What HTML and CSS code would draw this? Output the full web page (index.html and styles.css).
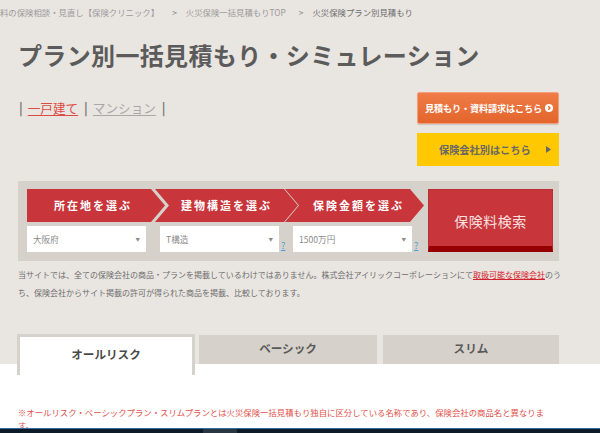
FILE: index.html
```html
<!DOCTYPE html>
<html lang="ja">
<head>
<meta charset="utf-8">
<title>火災保険プラン別見積もり</title>
<link rel="stylesheet" href="styles.css">
</head>
<body>
<div class="breadcrumb">
  <a class="bc-link" href="#">料の保険相談・見直し【保険クリニック】</a>
  <span class="bc-sep">&gt;</span>
  <a class="bc-link" href="#">火災保険一括見積もりTOP</a>
  <span class="bc-sep">&gt;</span>
  <span class="bc-current">火災保険プラン別見積もり</span>
</div>

<div class="wrap">
  <h1 class="title">プラン別一括見積もり・シミュレーション</h1>

  <div class="head-row">
    <div class="types">
      <span class="pipe">|</span>
      <a class="type type-active" href="#">一戸建て</a>
      <span class="pipe">|</span>
      <a class="type" href="#">マンション</a>
      <span class="pipe">|</span>
    </div>
    <div class="actions">
      <a class="btn-orange" href="#">見積もり・資料請求はこちら<svg class="circle-arrow" width="8" height="8" viewBox="0 0 8 8"><circle cx="4" cy="4" r="4" fill="#fff"/><path d="M3.2 2.2 L5 4 L3.2 5.8" fill="none" stroke="#e4672f" stroke-width="1.4"/></svg></a>
      <a class="btn-yellow" href="#"><span>保険会社別はこちら</span><svg class="tri" width="5" height="7" viewBox="0 0 5 7"><path d="M0 0 L5 3.5 L0 7 Z" fill="#666"/></svg></a>
    </div>
  </div>

  <div class="panel">
    <div class="cols">
      <div class="col">
        <div class="step step1">所在地を選ぶ</div>
        <div class="sel-row">
          <div class="select"><span>大阪府</span><span class="arrow">▼</span></div>
        </div>
      </div>
      <div class="col">
        <div class="step step2">建物構造を選ぶ</div>
        <div class="sel-row">
          <div class="select"><span>T構造</span><span class="arrow">▼</span></div>
          <a class="help" href="#">?</a>
        </div>
      </div>
      <div class="col col3">
        <div class="step step3">保険金額を選ぶ</div>
        <div class="sel-row">
          <div class="select"><span>1500万円</span><span class="arrow">▼</span></div>
          <a class="help" href="#">?</a>
        </div>
      </div>
    </div>
    <a class="search" href="#">保険料検索</a>
  </div>

  <p class="note">当サイトでは、全ての保険会社の商品・プランを掲載しているわけではありません。株式会社アイリックコーポレーションにて<a class="note-link" href="#">取扱可能な保険会社</a>のうち、保険会社からサイト掲載の許可が得られた商品を掲載、比較しております。</p>
</div>

<div class="tabbar">
  <div class="tab tab-active">オールリスク</div>
  <div class="tab">ベーシック</div>
  <div class="tab">スリム</div>
</div>
<div class="tabbody">
  <p class="red-note">※オールリスク・ベーシックプラン・スリムプランとは火災保険一括見積もり独自に区分している名称であり、保険会社の商品名と異なります。</p>
</div>

<div class="taskbar"><span class="task-item"></span></div>
</body>
</html>
```

FILE: styles.css
```css
* { box-sizing: border-box; }
html, body { margin: 0; padding: 0; }
body {
  width: 600px;
  height: 433px;
  overflow: hidden;
  background: #e9e5e1;
  font-family: "Noto Sans CJK JP", "Noto Sans", sans-serif;
  color: #666;
}
a { text-decoration: none; }

.breadcrumb {
  height: 25px;
  display: flex;
  align-items: center;
  font-size: 8.4px;
  white-space: nowrap;
  padding-bottom: 1px;
}
.bc-link { color: #9a9a9a; }
.bc-sep { color: #888; margin: 0 9px 0 13px; }
.bc-current { color: #6a6a6a; }

.wrap { padding-left: 18px; width: 560px; }

.title {
  margin: 15px 0 0 0;
  font-size: 24px;
  line-height: 30px;
  font-weight: 700;
  color: #5b5b5b;
  letter-spacing: 0.35px;
}

.head-row {
  margin-top: 22px;
  display: flex;
  justify-content: space-between;
  align-items: flex-start;
}
.types {
  display: flex;
  align-items: center;
  gap: 5px;
  margin-top: 7px;
  font-size: 12.6px;
  line-height: 18px;
}
.pipe { color: #7a7a7a; font-weight: 700; margin-left: 1px; }
.type { color: #a8a8a8; text-decoration: underline; text-underline-offset: 2px; }
.type-active { color: #de4b44; }

.actions {
  display: flex;
  flex-direction: column;
  gap: 9px;
  width: 142px;
  margin-right: 1px;
}
.btn-orange {
  height: 32px;
  display: flex;
  align-items: center;
  justify-content: center;
  gap: 2px;
  background: linear-gradient(#f07c47, #e2652c);
  border: 1px solid #f3a07d;
  border-radius: 2px;
  box-shadow: 0 1px 1px rgba(0,0,0,0.15);
  color: #fff;
  font-weight: 700;
  font-size: 9.2px;
  letter-spacing: -0.2px;
  padding-left: 2px;
}
.circle-arrow { flex: none; margin-left: 1px; }
.btn-yellow {
  height: 33px;
  display: flex;
  align-items: center;
  background: #ffc800;
  color: #676767;
  font-weight: 700;
  font-size: 10.2px;
  padding-left: 22px;
  padding-right: 8px;
}
.btn-yellow span { flex: 1; }

.panel {
  margin-top: 15px;
  width: 541px;
  background: #d6d2cb;
  padding: 8px 6px 9px 9px;
  display: flex;
  align-items: flex-start;
}
.cols {
  display: grid;
  grid-template-columns: 133px 133px 134px;
}
.col { display: flex; flex-direction: column; gap: 4px; }
.step {
  height: 33px;
  background: #c8353a;
  color: #fff;
  font-weight: 700;
  font-size: 11px;
  letter-spacing: 2px;
  line-height: 33px;
}
.step1 {
  width: 138px;
  clip-path: polygon(0 0, 124px 0, 138px 50%, 124px 100%, 0 100%);
  padding-left: 27px;
}
.step2 {
  width: 143px;
  margin-left: -5px;
  clip-path: polygon(0 0, 129px 0, 143px 50%, 129px 100%, 0 100%, 14px 50%);
  padding-left: 26px;
}
.step3 {
  width: 139px;
  margin-left: -8px;
  clip-path: polygon(0 0, 125px 0, 139px 50%, 125px 100%, 0 100%, 14px 50%);
  padding-left: 28px;
}
.sel-row { display: flex; align-items: flex-end; gap: 2px; }
.select {
  width: 119px;
  height: 26px;
  background: #fff;
  display: flex;
  align-items: center;
  justify-content: space-between;
  padding: 0 6px 0 6px;
  font-size: 8.6px;
  color: #8a8a8a;
}
.arrow { font-size: 4.5px; color: #8a8a8a; }
.help {
  font-size: 9px;
  line-height: 10px;
  color: #4a9fd8;
  text-decoration: underline;
  margin-bottom: 1px;
}

.search {
  width: 126px;
  height: 63px;
  margin-left: 1px;
  background: #c8353a;
  border: 1px solid #b83035;
  border-bottom: 6px solid #980000;
  color: #f6e0e0;
  font-size: 14px;
  letter-spacing: 0.5px;
  display: flex;
  align-items: center;
  justify-content: center;
  padding-top: 5px;
}

.note {
  margin: 5px 0 0 0;
  width: 548px;
  font-size: 8px;
  line-height: 18px;
  color: #6d6d6d;
}
.note-link { color: #d4202a; text-decoration: underline; }

.tabbar {
  margin-top: 32px;
  padding-left: 17px;
  display: flex;
  align-items: flex-start;
  gap: 4px;
  height: 30px;
}
.tab {
  width: 178px;
  height: 29px;
  margin-top: 1px;
  background: #d6d2cb;
  text-align: center;
  font-weight: 700;
  font-size: 11.6px;
  line-height: 26px;
  color: #5a5a5a;
}
.tab-active {
  position: relative;
  z-index: 1;
  margin-top: 0;
  height: 41px;
  margin-bottom: -11px;
  background: #fff;
  border: 3px solid #d6d2cb;
  border-bottom: 0;
  line-height: 34px;
  color: #4a4a4a;
}
.tab:last-child { margin-left: 2px; width: 176px; }

.tabbody {
  background: #fff;
  height: 80px;
  padding: 42px 0 0 18px;
}
.red-note {
  margin: 0;
  width: 540px;
  font-size: 8.4px;
  line-height: 13px;
  color: #e0504a;
}

.taskbar {
  position: fixed;
  left: 0;
  bottom: 0;
  width: 600px;
  height: 5px;
  background: #0d1a27;
  border-top: 1px solid #2f6da5;
}
.task-item {
  position: absolute;
  left: 203px;
  top: 0;
  width: 34px;
  height: 4px;
  background: #2a3642;
}
```
